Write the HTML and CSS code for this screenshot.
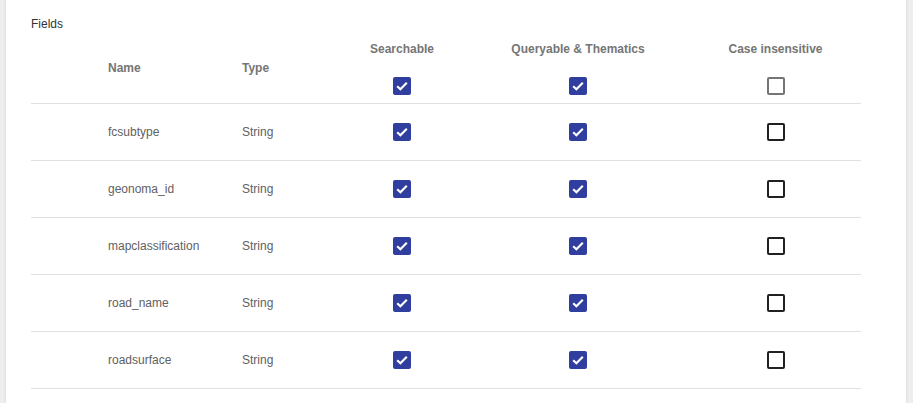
FILE: index.html
```html
<!DOCTYPE html>
<html>
<head>
<meta charset="utf-8">
<link rel="stylesheet" href="styles.css">
</head>
<body>
<div class="card">
  <div class="title">Fields</div>
  <div class="table">
    <div class="row head">
      <div class="cell"></div>
      <div class="cell hname">Name</div>
      <div class="cell hname">Type</div>
      <div class="cell hchk"><span class="hl">Searchable</span><span class="cb on"><svg viewBox="0 0 18 18"><path d="M4.2 9.2 L7.4 12.2 L13.8 5.8"/></svg></span></div>
      <div class="cell hchk"><span class="hl">Queryable &amp; Thematics</span><span class="cb on"><svg viewBox="0 0 18 18"><path d="M4.2 9.2 L7.4 12.2 L13.8 5.8"/></svg></span></div>
      <div class="cell hchk last"><span class="hl">Case insensitive</span><span class="cb dis"></span></div>
    </div>
    <div class="row">
      <div class="cell"></div>
      <div class="cell txt">fcsubtype</div>
      <div class="cell txt">String</div>
      <div class="cell chk"><span class="cb on"><svg viewBox="0 0 18 18"><path d="M4.2 9.2 L7.4 12.2 L13.8 5.8"/></svg></span></div>
      <div class="cell chk"><span class="cb on"><svg viewBox="0 0 18 18"><path d="M4.2 9.2 L7.4 12.2 L13.8 5.8"/></svg></span></div>
      <div class="cell chk last"><span class="cb off"></span></div>
    </div>
    <div class="row">
      <div class="cell"></div>
      <div class="cell txt">geonoma_id</div>
      <div class="cell txt">String</div>
      <div class="cell chk"><span class="cb on"><svg viewBox="0 0 18 18"><path d="M4.2 9.2 L7.4 12.2 L13.8 5.8"/></svg></span></div>
      <div class="cell chk"><span class="cb on"><svg viewBox="0 0 18 18"><path d="M4.2 9.2 L7.4 12.2 L13.8 5.8"/></svg></span></div>
      <div class="cell chk last"><span class="cb off"></span></div>
    </div>
    <div class="row">
      <div class="cell"></div>
      <div class="cell txt">mapclassification</div>
      <div class="cell txt">String</div>
      <div class="cell chk"><span class="cb on"><svg viewBox="0 0 18 18"><path d="M4.2 9.2 L7.4 12.2 L13.8 5.8"/></svg></span></div>
      <div class="cell chk"><span class="cb on"><svg viewBox="0 0 18 18"><path d="M4.2 9.2 L7.4 12.2 L13.8 5.8"/></svg></span></div>
      <div class="cell chk last"><span class="cb off"></span></div>
    </div>
    <div class="row">
      <div class="cell"></div>
      <div class="cell txt">road_name</div>
      <div class="cell txt">String</div>
      <div class="cell chk"><span class="cb on"><svg viewBox="0 0 18 18"><path d="M4.2 9.2 L7.4 12.2 L13.8 5.8"/></svg></span></div>
      <div class="cell chk"><span class="cb on"><svg viewBox="0 0 18 18"><path d="M4.2 9.2 L7.4 12.2 L13.8 5.8"/></svg></span></div>
      <div class="cell chk last"><span class="cb off"></span></div>
    </div>
    <div class="row">
      <div class="cell"></div>
      <div class="cell txt">roadsurface</div>
      <div class="cell txt">String</div>
      <div class="cell chk"><span class="cb on"><svg viewBox="0 0 18 18"><path d="M4.2 9.2 L7.4 12.2 L13.8 5.8"/></svg></span></div>
      <div class="cell chk"><span class="cb on"><svg viewBox="0 0 18 18"><path d="M4.2 9.2 L7.4 12.2 L13.8 5.8"/></svg></span></div>
      <div class="cell chk last"><span class="cb off"></span></div>
    </div>
  </div>
</div>
</body>
</html>
```

FILE: styles.css
```css
html, body {
  margin: 0;
  padding: 0;
  background: #eeeeee;
  height: 100%;
  overflow: hidden;
}
body {
  font-family: "Liberation Sans", Arial, sans-serif;
  font-size: 12px;
}
.card {
  margin: 0 7px 0 6px;
  background: #ffffff;
  min-height: 403px;
  box-shadow: 0 0 3px rgba(0,0,0,0.12);
  padding: 17px 45px 0 25px;
  box-sizing: border-box;
}
.title {
  color: #333333;
  font-size: 12px;
  line-height: 14px;
  height: 15px;
}
.table {
  display: flex;
  flex-direction: column;
}
.row {
  display: grid;
  grid-template-columns: 77px 134px 88px 144px 208px 179px;
  height: 56px;
  border-bottom: 1px solid #e0e0e0;
  align-items: center;
}
.row.head {
  height: 71px;
  align-items: stretch;
}
.cell.txt {
  color: #616161;
  line-height: 14px;
}
.cell.chk {
  display: flex;
  justify-content: center;
}
.cell.last {
  padding-left: 8px;
}
.hname {
  color: #757575;
  font-weight: bold;
  line-height: 14px;
  padding-top: 29px;
}
.hchk {
  display: flex;
  flex-direction: column;
  align-items: center;
  color: #757575;
  font-weight: bold;
}
.hl {
  line-height: 14px;
  margin-top: 10px;
  height: 14px;
}
.hchk .cb {
  margin-top: 21px;
}
.cb {
  display: block;
  width: 18px;
  height: 18px;
  box-sizing: border-box;
  border-radius: 2px;
}
.cb svg {
  display: block;
  width: 18px;
  height: 18px;
}
.cb svg path {
  fill: none;
  stroke: #ffffff;
  stroke-width: 2.2;
}
.cb.on {
  background: #303f9f;
}
.cb.off {
  border: 2px solid #212121;
}
.cb.dis {
  border: 2px solid #757575;
}
```
